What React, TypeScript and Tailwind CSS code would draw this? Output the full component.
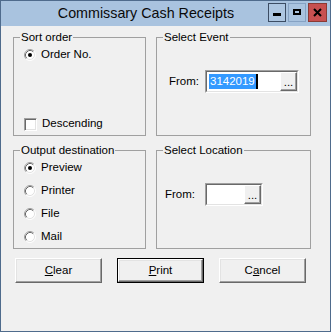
import type { ReactNode } from "react";

const Radio = ({ checked }: { checked?: boolean }) => (
  <svg width="12" height="12" viewBox="0 0 12 12" className="shrink-0">
    <circle cx="6" cy="6" r="5" fill="white" />
    <path d="M2.11 9.89 A5.5 5.5 0 0 1 9.89 2.11" fill="none" stroke="#a0a0a0" />
    <path d="M9.89 2.11 A5.5 5.5 0 0 1 2.11 9.89" fill="none" stroke="#ffffff" />
    <path d="M2.82 9.18 A4.5 4.5 0 0 1 9.18 2.82" fill="none" stroke="#696969" />
    <path d="M9.18 2.82 A4.5 4.5 0 0 1 2.82 9.18" fill="none" stroke="#e3e3e3" />
    {checked && <circle cx="6" cy="6" r="2" fill="black" />}
  </svg>
);

const Group = ({ label, children }: { label: string; children: ReactNode }) => (
  <div className="relative border border-[#a0a0a0]">
    <span className="absolute left-[6px] top-[-8px] px-[1px] bg-[#f0f0f0] leading-[14px] whitespace-nowrap">
      {label}
    </span>
    {children}
  </div>
);

const RadioRow = ({ label, checked }: { label: string; checked?: boolean }) => (
  <div className="flex items-center h-[16px] gap-[5px]">
    <Radio checked={checked} />
    <span>{label}</span>
  </div>
);

const Picker = ({ width, children }: { width: string; children?: ReactNode }) => (
  <div className={`${width} h-[23px] border border-t-[#a0a0a0] border-l-[#a0a0a0] border-r-white border-b-white`}>
    <div className="flex h-full border border-t-[#696969] border-l-[#696969] border-r-[#e3e3e3] border-b-[#e3e3e3] bg-white">
      <div className="flex-1 flex items-center pl-[2px] overflow-hidden">{children}</div>
      <div className="w-[17px] h-full flex items-end justify-center bg-[#f0f0f0] border border-t-white border-l-white border-r-[#696969] border-b-[#696969] shadow-[inset_-1px_-1px_0_#a0a0a0] leading-[14px] pb-[1px]">
        ...
      </div>
    </div>
  </div>
);

const DialogButton = ({ children, isDefault }: { children: ReactNode; isDefault?: boolean }) => (
  <div className={`w-[87px] h-[25px] ${isDefault ? "border border-black" : ""}`}>
    <div className="h-full flex items-center justify-center bg-[#f0f0f0] border border-t-white border-l-white border-r-[#696969] border-b-[#696969] shadow-[inset_-1px_-1px_0_#a0a0a0,inset_1px_1px_0_#e3e3e3]">
      {children}
    </div>
  </div>
);

export default function App() {
  return (
    <div className="w-[331px] h-[332px] flex flex-col border border-[#4f6b8c] bg-[#a9c3df] text-black font-['Liberation_Sans',Arial,sans-serif] text-[11.5px] select-none">
      {/* Title bar */}
      <div className="h-[25px] flex items-start">
        <span className="flex-1 text-center pl-[23px] leading-[25px] text-[14.3px] text-[#0a0a0a]">
          Commissary Cash Receipts
        </span>
        <div className="flex gap-[2px] pt-[2px] pr-[3px]">
          <div className="w-[18px] h-[19px] border border-[#3c4d64] bg-[#adc6e1]">
            <svg width="16" height="17" viewBox="0 0 16 17">
              <rect x="4" y="9" width="8" height="3" fill="black" />
            </svg>
          </div>
          <div className="w-[18px] h-[19px] border border-[#86a2c3] bg-[#a9c3df]">
            <svg width="16" height="17" viewBox="0 0 16 17">
              <rect x="5" y="6" width="6" height="4" fill="none" stroke="black" strokeWidth="2" />
            </svg>
          </div>
          <div className="w-[19px] h-[19px] border border-[#8b3a34] bg-[#c75050]">
            <svg width="17" height="17" viewBox="0 0 17 17">
              <path d="M5 5 L12 12 M12 5 L5 12" stroke="black" strokeWidth="2" />
            </svg>
          </div>
        </div>
      </div>

      {/* Client area */}
      <div className="flex-1 bg-[#f0f0f0] pl-[12px] pt-[11px]">
        <div className="grid grid-cols-[133px_155px] grid-rows-[99px_99px] gap-x-[10px] gap-y-[14px]">
          <Group label="Sort order">
            <div className="h-full flex flex-col justify-between pt-[9px] pb-[3px] pl-[10px]">
              <RadioRow label="Order No." checked />
              <div className="flex items-center h-[16px] gap-[5px]">
                <div className="w-[13px] h-[13px] bg-white border border-t-[#a0a0a0] border-l-[#a0a0a0] border-r-white border-b-white shadow-[inset_1px_1px_0_#696969,inset_-1px_-1px_0_#e3e3e3]" />
                <span>Descending</span>
              </div>
            </div>
          </Group>

          <Group label="Select Event">
            <div className="flex items-center pt-[32px] pl-[12px]">
              <span className="w-[36px]">From:</span>
              <Picker width="w-[94px]">
                <span className="h-[15px] flex items-center bg-[#3399ff] text-white px-[1px]">3142019</span>
                <span className="w-[2px] h-[15px] bg-black" />
              </Picker>
            </div>
          </Group>

          <Group label="Output destination">
            <div className="flex flex-col gap-[7px] pt-[9px] pl-[10px]">
              <RadioRow label="Preview" checked />
              <RadioRow label="Printer" />
              <RadioRow label="File" />
              <RadioRow label="Mail" />
            </div>
          </Group>

          <Group label="Select Location">
            <div className="flex items-center pt-[32px] pl-[8px]">
              <span className="w-[40px]">From:</span>
              <Picker width="w-[58px]" />
            </div>
          </Group>
        </div>

        <div className="flex gap-[15px] ml-[2px] mt-[9px]">
          <DialogButton>
            <span><u>C</u>lear</span>
          </DialogButton>
          <DialogButton isDefault>
            <span><u>P</u>rint</span>
          </DialogButton>
          <DialogButton>
            <span>C<u>a</u>ncel</span>
          </DialogButton>
        </div>
      </div>
    </div>
  );
}
